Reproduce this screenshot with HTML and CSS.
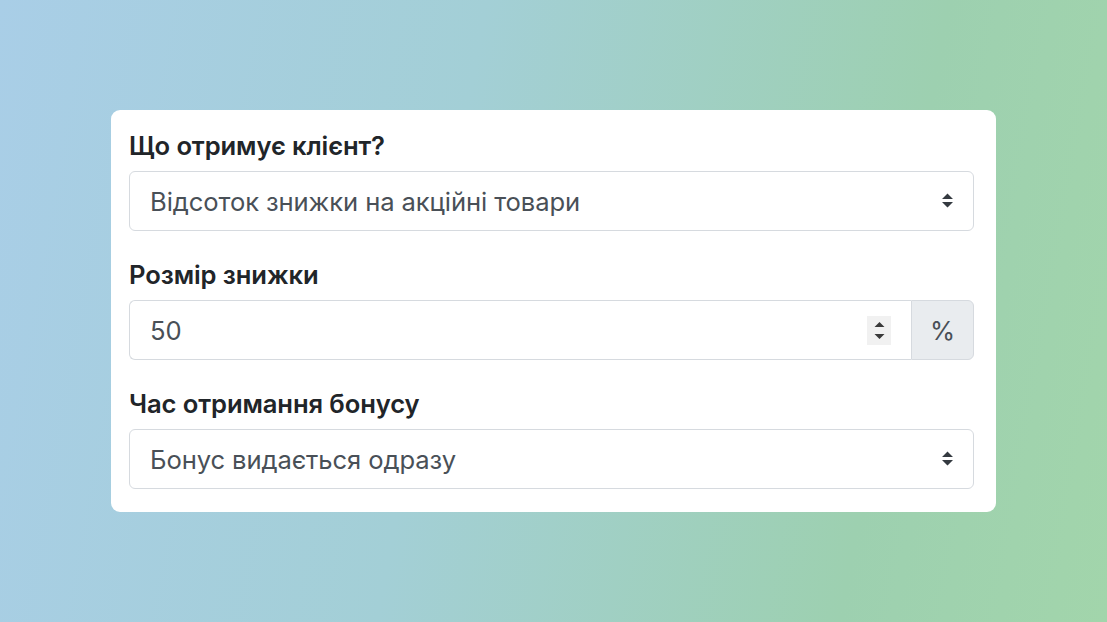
FILE: index.html
```html
<!DOCTYPE html>
<html lang="uk">
<head>
<meta charset="utf-8">
<title>Бонус</title>
<link rel="stylesheet" href="styles.css">
</head>
<body>
<div class="page">
  <form class="card">
    <div class="group">
      <label class="label" for="kind">Що отримує клієнт?</label>
      <div class="select-wrap">
        <select id="kind" class="control">
          <option>Відсоток знижки на акційні товари</option>
        </select>
        <svg class="arrows" width="13" height="17" viewBox="0 0 13 17"><path d="M1 7 L6.5 1.5 L12 7 Z M1 10 L6.5 15.5 L12 10 Z" fill="#343a40"/></svg>
      </div>
    </div>
    <div class="group">
      <label class="label" for="size">Розмір знижки</label>
      <div class="input-group">
        <div class="num-box">
          <input id="size" class="num" type="text" value="50">
          <span class="spinner"><svg width="24" height="29" viewBox="0 0 24 29"><path d="M7.5 11 L12.5 6 L17.5 11 Z M7.5 18 L12.5 23 L17.5 18 Z" fill="#3a3a3a"/></svg></span>
        </div>
        <span class="addon">%</span>
      </div>
    </div>
    <div class="group">
      <label class="label" for="time">Час отримання бонусу</label>
      <div class="select-wrap">
        <select id="time" class="control">
          <option>Бонус видається одразу</option>
        </select>
        <svg class="arrows" width="13" height="17" viewBox="0 0 13 17"><path d="M1 7 L6.5 1.5 L12 7 Z M1 10 L6.5 15.5 L12 10 Z" fill="#343a40"/></svg>
      </div>
    </div>
  </form>
</div>
</body>
</html>
```

FILE: styles.css
```css
* { box-sizing: border-box; }
html, body { margin: 0; height: 100%; }
body {
  font-family: Inter, "Noto Sans", "Liberation Sans", sans-serif;
  background: linear-gradient(100deg, #a9cee7 0%, #a3cfd6 40%, #9dd0b0 78%, #a2d5ab 100%);
}
.page {
  height: 622px;
  padding-top: 110px;
  padding-left: 111px;
}
.card {
  width: 885px;
  background: #fff;
  border-radius: 9px;
  padding: 21px 22px 23px 18px;
  display: flex;
  flex-direction: column;
  gap: 29px;
}
.group { display: flex; flex-direction: column; }
.label {
  font-size: 25.6px;
  line-height: 30px;
  font-weight: 600;
  color: #212529;
  margin-bottom: 10px;
  letter-spacing: -0.1px;
}
.select-wrap { position: relative; }
.control {
  display: block;
  width: 100%;
  height: 60px;
  -webkit-appearance: none;
  appearance: none;
  border: 1px solid #d6dadf;
  border-radius: 6px;
  background: #fff;
  padding: 0 40px 0 20px;
  font-family: inherit;
  font-size: 25.6px;
  color: #495057;
  letter-spacing: -0.1px;
}
.arrows {
  position: absolute;
  right: 20px;
  top: 21px;
  pointer-events: none;
}
.input-group {
  display: flex;
  height: 60px;
}
.num-box {
  flex: 1;
  display: flex;
  align-items: center;
  border: 1px solid #d6dadf;
  border-right: none;
  border-radius: 6px 0 0 6px;
  padding: 0 20px 0 20px;
}
.num {
  flex: 1;
  border: none;
  outline: none;
  font-family: inherit;
  font-size: 25.6px;
  color: #495057;
  padding: 0;
  background: transparent;
}
.spinner {
  display: flex;
  width: 24px;
  height: 29px;
  background: #f1f1f1;
  margin-top: 1px;
}
.addon {
  width: 63px;
  display: flex;
  align-items: center;
  justify-content: center;
  background: #e9ecef;
  border: 1px solid #d6dadf;
  border-radius: 0 6px 6px 0;
  font-size: 25.6px;
  color: #495057;
}
```
